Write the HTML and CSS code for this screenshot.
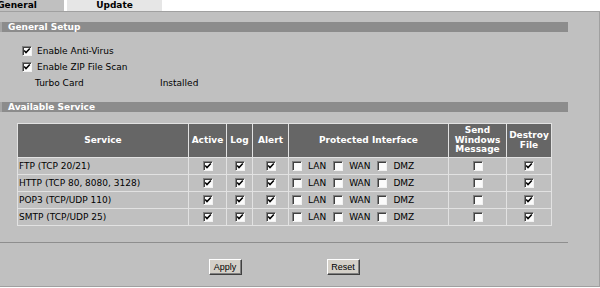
FILE: index.html
```html
<!DOCTYPE html>
<html lang="en">
<head>
    <meta charset="UTF-8">
    <title>Anti-Virus</title>
    <link rel="stylesheet" href="styles.css">
</head>
<body>
    <div class="tabs">
        <div class="tab active">General</div>
        <div class="tab">Update</div>
    </div>

    <div class="panel">
        <div class="section">General Setup</div>

        <div class="options">
            <div class="opt"><span class="cb"><svg viewBox="0 0 8 8"><path d="M1.2 3.6 L3 5.6 L6.8 1.6"/></svg></span>Enable Anti-Virus</div>
            <div class="opt"><span class="cb"><svg viewBox="0 0 8 8"><path d="M1.2 3.6 L3 5.6 L6.8 1.6"/></svg></span>Enable ZIP File Scan</div>
            <div class="opt info"><span class="key">Turbo Card</span><span>Installed</span></div>
        </div>

        <div class="section">Available Service</div>

        <table class="services">
            <colgroup>
                <col style="width:171px">
                <col style="width:38px">
                <col style="width:26px">
                <col style="width:36px">
                <col style="width:160px">
                <col style="width:58px">
                <col style="width:45px">
            </colgroup>
            <tr>
                <th>Service</th>
                <th>Active</th>
                <th>Log</th>
                <th>Alert</th>
                <th>Protected Interface</th>
                <th>Send<br>Windows<br>Message</th>
                <th>Destroy<br>File</th>
            </tr>
            <tr>
                <td class="name">FTP (TCP 20/21)</td>
                <td><span class="cb"><svg viewBox="0 0 8 8"><path d="M1.2 3.6 L3 5.6 L6.8 1.6"/></svg></span></td>
                <td><span class="cb"><svg viewBox="0 0 8 8"><path d="M1.2 3.6 L3 5.6 L6.8 1.6"/></svg></span></td>
                <td><span class="cb"><svg viewBox="0 0 8 8"><path d="M1.2 3.6 L3 5.6 L6.8 1.6"/></svg></span></td>
                <td class="ifaces"><span class="cb"></span><span class="lbl">LAN</span><span class="cb"></span><span class="lbl">WAN</span><span class="cb"></span><span class="lbl">DMZ</span></td>
                <td><span class="cb"></span></td>
                <td><span class="cb"><svg viewBox="0 0 8 8"><path d="M1.2 3.6 L3 5.6 L6.8 1.6"/></svg></span></td>
            </tr>
            <tr>
                <td class="name">HTTP (TCP 80, 8080, 3128)</td>
                <td><span class="cb"><svg viewBox="0 0 8 8"><path d="M1.2 3.6 L3 5.6 L6.8 1.6"/></svg></span></td>
                <td><span class="cb"><svg viewBox="0 0 8 8"><path d="M1.2 3.6 L3 5.6 L6.8 1.6"/></svg></span></td>
                <td><span class="cb"><svg viewBox="0 0 8 8"><path d="M1.2 3.6 L3 5.6 L6.8 1.6"/></svg></span></td>
                <td class="ifaces"><span class="cb"></span><span class="lbl">LAN</span><span class="cb"></span><span class="lbl">WAN</span><span class="cb"></span><span class="lbl">DMZ</span></td>
                <td><span class="cb"></span></td>
                <td><span class="cb"><svg viewBox="0 0 8 8"><path d="M1.2 3.6 L3 5.6 L6.8 1.6"/></svg></span></td>
            </tr>
            <tr>
                <td class="name">POP3 (TCP/UDP 110)</td>
                <td><span class="cb"><svg viewBox="0 0 8 8"><path d="M1.2 3.6 L3 5.6 L6.8 1.6"/></svg></span></td>
                <td><span class="cb"><svg viewBox="0 0 8 8"><path d="M1.2 3.6 L3 5.6 L6.8 1.6"/></svg></span></td>
                <td><span class="cb"><svg viewBox="0 0 8 8"><path d="M1.2 3.6 L3 5.6 L6.8 1.6"/></svg></span></td>
                <td class="ifaces"><span class="cb"></span><span class="lbl">LAN</span><span class="cb"></span><span class="lbl">WAN</span><span class="cb"></span><span class="lbl">DMZ</span></td>
                <td><span class="cb"></span></td>
                <td><span class="cb"><svg viewBox="0 0 8 8"><path d="M1.2 3.6 L3 5.6 L6.8 1.6"/></svg></span></td>
            </tr>
            <tr>
                <td class="name">SMTP (TCP/UDP 25)</td>
                <td><span class="cb"><svg viewBox="0 0 8 8"><path d="M1.2 3.6 L3 5.6 L6.8 1.6"/></svg></span></td>
                <td><span class="cb"><svg viewBox="0 0 8 8"><path d="M1.2 3.6 L3 5.6 L6.8 1.6"/></svg></span></td>
                <td><span class="cb"><svg viewBox="0 0 8 8"><path d="M1.2 3.6 L3 5.6 L6.8 1.6"/></svg></span></td>
                <td class="ifaces"><span class="cb"></span><span class="lbl">LAN</span><span class="cb"></span><span class="lbl">WAN</span><span class="cb"></span><span class="lbl">DMZ</span></td>
                <td><span class="cb"></span></td>
                <td><span class="cb"><svg viewBox="0 0 8 8"><path d="M1.2 3.6 L3 5.6 L6.8 1.6"/></svg></span></td>
            </tr>
        </table>

        <hr class="divider">

        <div class="actions">
            <button>Apply</button>
            <button>Reset</button>
        </div>
    </div>
</body>
</html>
```

FILE: styles.css
```css
body {
    margin: 0;
    background: #fff;
    font-family: "DejaVu Sans", Verdana, sans-serif;
    font-size: 9px;
    color: #000;
    overflow: hidden;
}
.tabs {
    display: flex;
    gap: 3px;
    height: 11px;
    margin-left: -30px;
}
.tab {
    width: 95px;
    line-height: 11px;
    text-align: center;
    font-weight: bold;
    background: #e6e6e6;
}
.tab.active {
    width: 94px;
    background: #c0c0c0;
}
.panel {
    height: 274px;
    background: #c0c0c0;
    border-top: 1px solid #a0a0a0;
    border-right: 1px solid #a0a0a0;
    border-bottom: 1px solid #a0a0a0;
    overflow: hidden;
}
.section {
    margin: 11px 31px 0 0;
    height: 10px;
    line-height: 10px;
    padding-left: 6px;
    border-left: 2px solid #a6a6a6;
    background: #8c8c8c;
    color: #fff;
    font-weight: bold;
}
.panel > .section:first-child {
    margin-top: 10px;
}
.options {
    margin-top: 11px;
}
.opt {
    display: flex;
    align-items: center;
    height: 16px;
    padding-left: 22px;
}
.opt .cb {
    margin-right: 5px;
}
.opt.info {
    padding-left: 35px;
}
.key {
    width: 125px;
}
.cb {
    display: inline-block;
    width: 8px;
    height: 8px;
    border: 1px solid;
    border-color: #808080 #f2f2f2 #f2f2f2 #808080;
    background: #fbfbfb;
    box-shadow: inset 1px 1px 0 #404040;
    vertical-align: middle;
}
.cb svg {
    display: block;
    width: 8px;
    height: 8px;
}
.cb path {
    fill: none;
    stroke: #000;
    stroke-width: 1.5;
}
.services {
    margin: 11px 0 0 17px;
    width: 534px;
    table-layout: fixed;
    border-collapse: collapse;
}
.services th,
.services td {
    border: 1px solid #e2e2e2;
}
.services th {
    height: 31px;
    padding: 1px 0;
    background: #666;
    color: #fff;
    font-weight: bold;
    line-height: 9.5px;
}
.services td {
    height: 16px;
    padding: 0;
    text-align: center;
}
.services td.name {
    text-align: left;
    padding-left: 1px;
}
.services td.ifaces {
    text-align: left;
    padding-left: 3px;
    white-space: nowrap;
}
.ifaces .lbl {
    margin: 0 7px 0 6px;
    vertical-align: middle;
}
.divider {
    margin: 16px 31px 0 0;
    border: 0;
    border-top: 1px solid #8e8e8e;
    height: 0;
}
.actions {
    display: flex;
    justify-content: center;
    gap: 85px;
    margin: 16px 31px 0 0;
}
button {
    width: 33px;
    height: 16px;
    padding: 0;
    font-family: "Liberation Sans", Arial, sans-serif;
    font-size: 9px;
    color: #000;
    background: #d4d0c8;
    border: 1px solid;
    border-color: #fff #404040 #404040 #fff;
    box-shadow: inset -1px -1px 0 #808080;
}
```
